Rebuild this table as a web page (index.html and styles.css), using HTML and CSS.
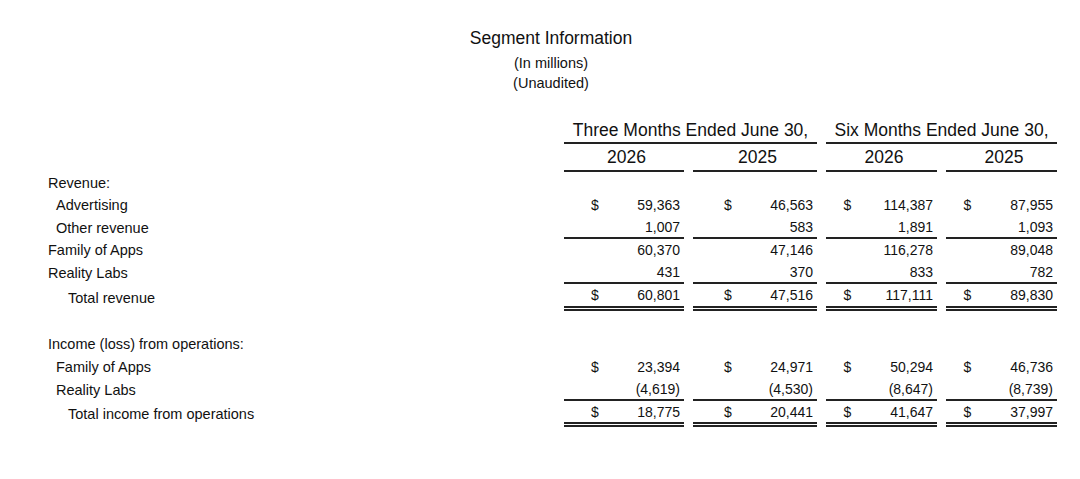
FILE: index.html
```html
<!DOCTYPE html>
<html lang="en">
<head>
<meta charset="utf-8">
<title>Segment Information</title>
<link rel="stylesheet" href="styles.css">
</head>
<body>
<header class="report-head">
  <h1 class="title">Segment Information</h1>
  <p class="sub">(In millions)</p>
  <p class="sub">(Unaudited)</p>
</header>

<div class="seg-table">
  <!-- header row 1 -->
  <div class="lbl"></div>
  <div class="period">Three Months Ended June 30,</div>
  <div class="period">Six Months Ended June 30,</div>

  <!-- header row 2 -->
  <div class="lbl"></div>
  <div class="year">2026</div>
  <div class="year">2025</div>
  <div class="year">2026</div>
  <div class="year">2025</div>

  <!-- Revenue: -->
  <div class="lbl i0">Revenue:</div>
  <div class="val"></div><div class="val"></div><div class="val"></div><div class="val"></div>

  <!-- Advertising -->
  <div class="lbl i1">Advertising</div>
  <div class="val c1"><span>$</span><span>59,363</span></div>
  <div class="val c2"><span>$</span><span>46,563</span></div>
  <div class="val c3"><span>$</span><span>114,387</span></div>
  <div class="val c4"><span>$</span><span>87,955</span></div>

  <!-- Other revenue -->
  <div class="lbl i1">Other revenue</div>
  <div class="val line"><span></span><span>1,007</span></div>
  <div class="val line"><span></span><span>583</span></div>
  <div class="val line"><span></span><span>1,891</span></div>
  <div class="val line"><span></span><span>1,093</span></div>

  <!-- Family of Apps -->
  <div class="lbl i0">Family of Apps</div>
  <div class="val"><span></span><span>60,370</span></div>
  <div class="val"><span></span><span>47,146</span></div>
  <div class="val"><span></span><span>116,278</span></div>
  <div class="val"><span></span><span>89,048</span></div>

  <!-- Reality Labs -->
  <div class="lbl i0">Reality Labs</div>
  <div class="val line"><span></span><span>431</span></div>
  <div class="val line"><span></span><span>370</span></div>
  <div class="val line"><span></span><span>833</span></div>
  <div class="val line"><span></span><span>782</span></div>

  <!-- Total revenue -->
  <div class="lbl i2">Total revenue</div>
  <div class="val c1 dbl"><span>$</span><span>60,801</span></div>
  <div class="val c2 dbl"><span>$</span><span>47,516</span></div>
  <div class="val c3 dbl"><span>$</span><span>117,111</span></div>
  <div class="val c4 dbl"><span>$</span><span>89,830</span></div>

  <!-- spacer -->
  <div class="lbl"></div>
  <div class="val"></div><div class="val"></div><div class="val"></div><div class="val"></div>

  <!-- Income (loss) from operations: -->
  <div class="lbl i0">Income (loss) from operations:</div>
  <div class="val"></div><div class="val"></div><div class="val"></div><div class="val"></div>

  <!-- Family of Apps -->
  <div class="lbl i1">Family of Apps</div>
  <div class="val c1"><span>$</span><span>23,394</span></div>
  <div class="val c2"><span>$</span><span>24,971</span></div>
  <div class="val c3"><span>$</span><span>50,294</span></div>
  <div class="val c4"><span>$</span><span>46,736</span></div>

  <!-- Reality Labs -->
  <div class="lbl i1">Reality Labs</div>
  <div class="val line"><span></span><span>(4,619)</span></div>
  <div class="val line"><span></span><span>(4,530)</span></div>
  <div class="val line"><span></span><span>(8,647)</span></div>
  <div class="val line"><span></span><span>(8,739)</span></div>

  <!-- Total income from operations -->
  <div class="lbl i2">Total income from operations</div>
  <div class="val c1 dbl"><span>$</span><span>18,775</span></div>
  <div class="val c2 dbl"><span>$</span><span>20,441</span></div>
  <div class="val c3 dbl"><span>$</span><span>41,647</span></div>
  <div class="val c4 dbl"><span>$</span><span>37,997</span></div>
</div>
</body>
</html>
```

FILE: styles.css
```css
html, body {
  margin: 0;
  padding: 0;
  background: #ffffff;
}

body {
  font-family: "Liberation Sans", Arial, sans-serif;
  color: #111111;
}

.report-head {
  width: 200px;
  margin: 26px 0 0 451px;
  text-align: center;
}

.title {
  margin: 0;
  font-size: 17.5px;
  font-weight: normal;
  line-height: 24px;
}

.sub {
  margin: 0;
  font-size: 14.5px;
  line-height: 20px;
}

.title + .sub {
  margin-top: 3px;
}

.seg-table {
  display: grid;
  margin: 25px 0 0 48px;
  width: 1009px;
  grid-template-columns: 507px 120px 124px 111px 111px;
  grid-template-rows: 26px 28px 22px 22px 23px 22px 23px 27px 22px 22px 23px 23px 26px;
  column-gap: 9px;
}

.seg-table > div {
  box-sizing: border-box;
  display: flex;
  align-items: center;
  min-width: 0;
}

.lbl {
  font-size: 14.5px;
  white-space: nowrap;
}

.i0 { padding-left: 0; }
.i1 { padding-left: 8px; }
.i2 { padding-left: 20px; }

.period {
  grid-column: span 2;
  justify-content: center;
  font-size: 17.5px;
  border-bottom: 2px solid #222222;
  white-space: nowrap;
}

.year {
  justify-content: center;
  padding-left: 5px;
  font-size: 17.5px;
  border-bottom: 2px solid #222222;
}

.val {
  justify-content: space-between;
  font-size: 14px;
  padding-right: 4px;
  white-space: nowrap;
}

.val.c1 { padding-left: 27px; }
.val.c2 { padding-left: 31px; }
.val.c3 { padding-left: 17.5px; }
.val.c4 { padding-left: 17.5px; }

.line {
  border-bottom: 2px solid #222222;
}

.dbl {
  border-bottom: 5px double #222222;
}
```
